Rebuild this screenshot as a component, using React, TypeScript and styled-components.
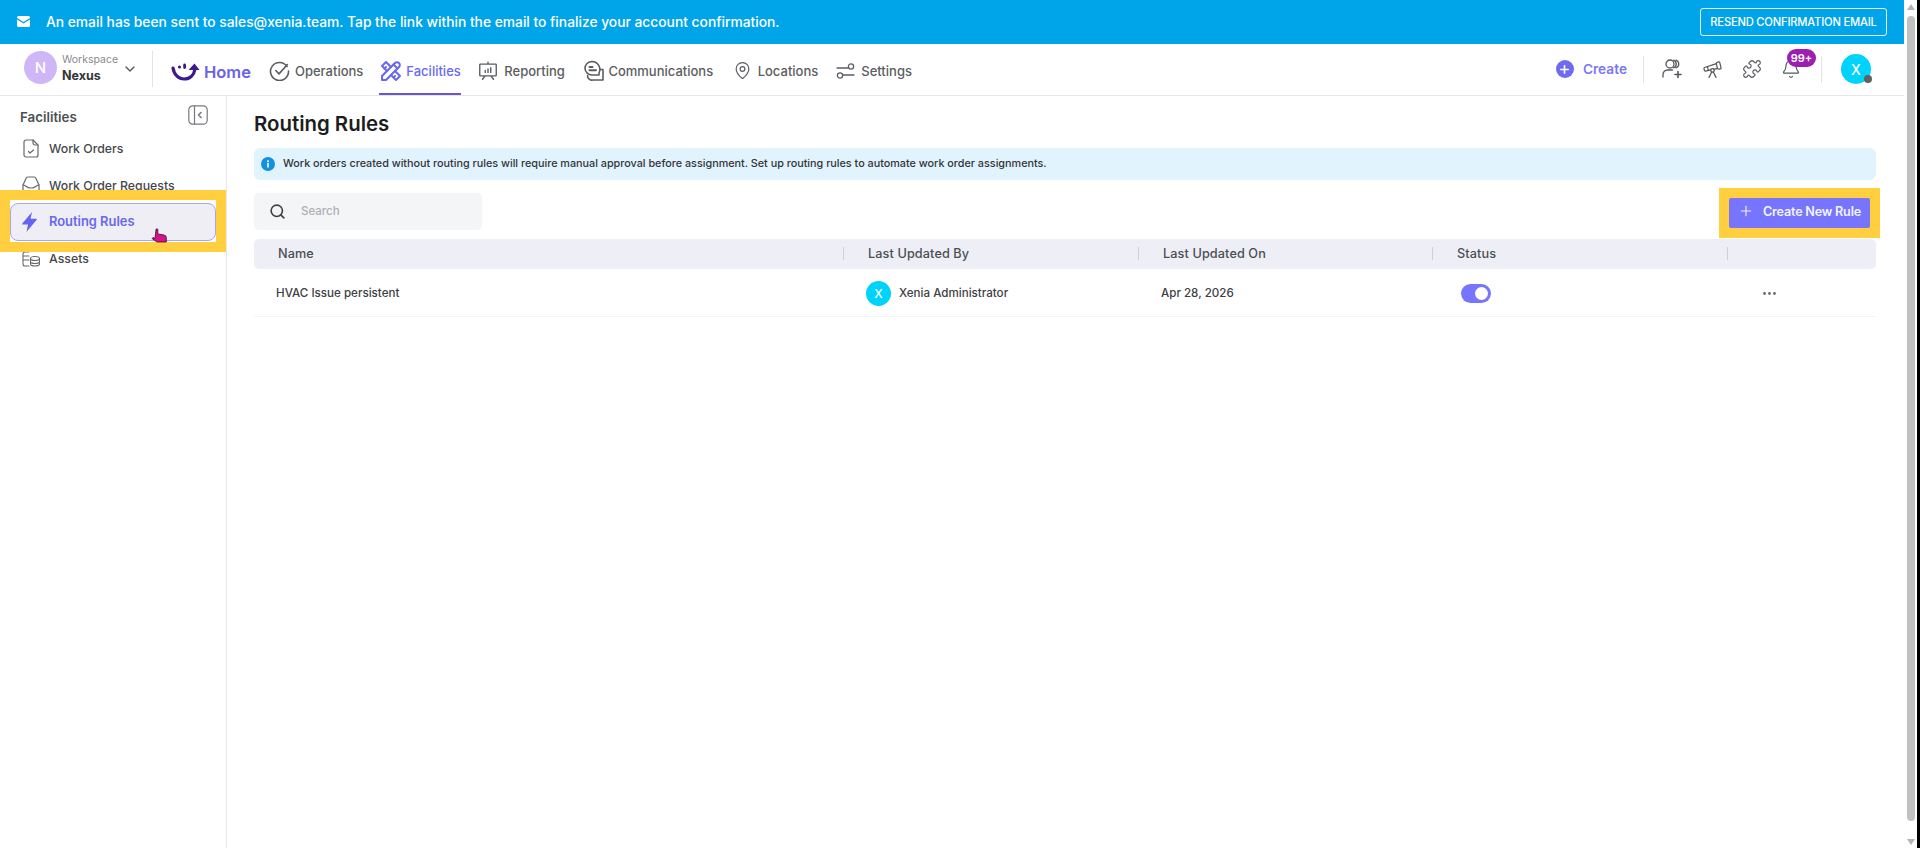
import React from "react";
import styled, { createGlobalStyle } from "styled-components";
import { Bell, MapPin, Puzzle, Search, Telescope, ChevronDown, Plus, MoreHorizontal } from "lucide-react";
import { TbTools } from "react-icons/tb";
import { PiPresentationChart } from "react-icons/pi";

const Global = createGlobalStyle`
  html, body { margin: 0; padding: 0; height: 848px; overflow: hidden; background: #000; }
  body { font-family: Inter, "Noto Sans", "Liberation Sans", sans-serif; color: #212327; }
  * { box-sizing: border-box; }
`;

const Page = styled.div`
  display: flex;
  width: 1920px;
  height: 848px;
  background: #000;
`;
const AppShell = styled.div`
  display: flex;
  flex-direction: column;
  width: 1904px;
  height: 100%;
  background: #fff;
`;
const ScrollTrack = styled.div`
  display: flex;
  flex-direction: column;
  align-items: center;
  width: 13px;
  height: 100%;
  padding: 4px 0 3px;
  background: #fff;
`;
const ScrollThumb = styled.div`
  flex: 1;
  width: 8px;
  margin: 6px 0 18px;
  border-radius: 4px;
  background: #c1c1c1;
`;
const Arrow = styled.div<{ $down?: boolean }>`
  width: 0;
  height: 0;
  border-left: 4px solid transparent;
  border-right: 4px solid transparent;
  ${(p) => (p.$down ? "border-top: 6px solid #b4b4b4;" : "border-bottom: 6px solid #b4b4b4;")}
`;
const Banner = styled.div`
  display: flex;
  align-items: center;
  height: 43.5px;
  padding: 0 17px 0 17px;
  background: #00a4e9;
  color: #fff;
`;
const BannerText = styled.span`
  margin-left: 16px;
  flex: 1;
  font-size: 13.8px;
  font-weight: 500;
  white-space: nowrap;
`;
const ResendButton = styled.button`
  width: 187px;
  height: 28px;
  padding: 0;
  border: 1px solid #e6f6fd;
  border-radius: 3px;
  background: transparent;
  color: #fff;
  font: 500 11.2px Inter, sans-serif;
  letter-spacing: -0.2px;
  white-space: nowrap;
`;
const Header = styled.header`
  display: flex;
  align-items: center;
  height: 52px;
  padding: 0 33px 0 24px;
  border-bottom: 1px solid #e6e6e8;
`;
const WorkspaceAvatar = styled.div`
  display: flex;
  align-items: center;
  justify-content: center;
  width: 33px;
  height: 33px;
  margin-bottom: 3px;
  border-radius: 50%;
  background: #cfb6f6;
  color: #fff;
  font-size: 15px;
  font-weight: 500;
`;
const WorkspaceInfo = styled.div`
  display: flex;
  flex-direction: column;
  gap: 2px;
  width: 60px;
  margin: 0 0 3px 5px;
`;
const WorkspaceLabel = styled.span`
  color: #8a8a8e;
  font-size: 10.5px;
  line-height: 13px;
`;
const WorkspaceName = styled.span`
  color: #34363a;
  font-size: 12.5px;
  font-weight: 700;
  line-height: 15px;
`;
const VDivider = styled.div<{ $h?: number; $ml?: number }>`
  width: 1px;
  height: ${(p) => p.$h ?? 36}px;
  margin-left: ${(p) => p.$ml ?? 0}px;
  background: #e4e4e6;
`;
const Nav = styled.nav`
  display: flex;
  align-items: stretch;
  align-self: stretch;
  margin-left: 18px;
  flex: 1;
`;
const HomeLink = styled.a`
  display: flex;
  align-items: center;
  gap: 4px;
  margin-right: 18px;
  padding-top: 5px;
  color: #6a62e6;
  font-size: 16.5px;
  font-weight: 600;
`;
const NavLink = styled.a<{ $active?: boolean; $gap: number; $mr: number }>`
  display: flex;
  align-items: center;
  gap: ${(p) => p.$gap}px;
  height: 100%;
  margin-right: ${(p) => p.$mr}px;
  padding-top: 5px;
  border-bottom: 2px solid ${(p) => (p.$active ? "#6457cf" : "transparent")};
  color: ${(p) => (p.$active ? "#6868f0" : "#5b5d61")};
  font-size: 13px;
  font-weight: 500;
  white-space: nowrap;
`;
const Actions = styled.div`
  display: flex;
  align-items: center;
  color: #55575b;
`;
const CreateLink = styled.a`
  display: flex;
  align-items: center;
  gap: 9px;
  margin-right: 16px;
  color: #7b78f5;
  font-size: 13.7px;
  font-weight: 600;
`;
const CreateIcon = styled.span`
  display: flex;
  align-items: center;
  justify-content: center;
  width: 18px;
  height: 18px;
  border-radius: 50%;
  background: #6d6bf0;
  color: #fff;
`;
const IconGroup = styled.div`
  display: flex;
  align-items: center;
  gap: 19px;
  margin: 0 0 0 18px;
`;
const BellWrap = styled.span`
  position: relative;
  display: flex;
  width: 20px;
`;
const Badge = styled.span`
  position: absolute;
  top: -10px;
  left: 6px;
  width: 29px;
  height: 18px;
  border-radius: 9px;
  background: #9c1fb0;
  color: #fff;
  font-size: 11px;
  font-weight: 600;
  line-height: 18px;
  text-align: center;
`;
const Avatar = styled.div<{ $size: number; $font: number; $ml?: number }>`
  position: relative;
  display: flex;
  flex: none;
  align-items: center;
  justify-content: center;
  width: ${(p) => p.$size}px;
  height: ${(p) => p.$size}px;
  margin-left: ${(p) => p.$ml ?? 0}px;
  border-radius: 50%;
  background: #00d3fb;
  color: #fff;
  font-size: ${(p) => p.$font}px;
  font-weight: 500;
`;
const StatusDot = styled.span`
  position: absolute;
  right: -1px;
  bottom: 1px;
  width: 8px;
  height: 8px;
  border-radius: 50%;
  background: #616161;
`;
const Body = styled.div`
  display: flex;
  flex: 1;
  min-height: 0;
`;
const Sidebar = styled.aside`
  display: flex;
  flex-direction: column;
  width: 227px;
  border-right: 1px solid #e8e8ea;
`;
const SidebarHead = styled.div`
  display: flex;
  align-items: flex-start;
  justify-content: space-between;
  height: 35px;
  padding: 9px 18px 0 20px;
`;
const SidebarTitle = styled.span`
  margin-top: 4px;
  color: #4d4f53;
  font-size: 13.3px;
  font-weight: 600;
  line-height: 16px;
`;
const SideItem = styled.a`
  display: flex;
  align-items: center;
  gap: 9px;
  height: 36.5px;
  padding-left: 22px;
  color: #45474b;
  font-size: 12.3px;
  font-weight: 500;
  white-space: nowrap;
`;
const SideIcon = styled.span`
  display: flex;
  justify-content: center;
  width: 18px;
`;
const Highlight = styled.div`
  position: relative;
  z-index: 1;
  height: 62px;
  margin: -14px 0 -11px;
  padding: 10px;
  background: #ffcf3f;
`;
const HighlightInner = styled.div`
  position: relative;
  height: 42px;
  padding-top: 3px;
  background: #fff;
`;
const ActiveSideItem = styled(SideItem)`
  height: 38px;
  padding-left: 9px;
  gap: 11px;
  border: 1px solid #a7a6f2;
  border-radius: 8px;
  background: #eeeef4;
  color: #6868f0;
  font-size: 12.9px;
  font-weight: 600;
`;
const HandCursor = styled.svg`
  position: absolute;
  left: 141px;
  top: 28px;
`;
const Main = styled.main`
  display: flex;
  flex: 1;
  flex-direction: column;
  padding: 14px 28px 0 27px;
  min-width: 0;
`;
const Title = styled.h1`
  margin: 0;
  height: 38px;
  color: #1c1d20;
  font-size: 20.4px;
  font-weight: 600;
  line-height: 28px;
`;
const InfoBar = styled.div`
  display: flex;
  align-items: center;
  gap: 8px;
  height: 32px;
  padding-left: 7px;
  border-radius: 6px;
  background: #e1f3fd;
  color: #33353a;
  font-size: 10.8px;
  font-weight: 500;
  white-space: nowrap;
`;
const Toolbar = styled.div`
  display: flex;
  align-items: center;
  justify-content: space-between;
  height: 37px;
  margin-top: 13px;
`;
const SearchBox = styled.div`
  display: flex;
  align-items: center;
  gap: 15px;
  width: 228px;
  height: 37px;
  padding-left: 15px;
  border-radius: 5px;
  background: #f4f5f7;
  color: #3f4145;
`;
const SearchHint = styled.span`
  color: #adafb4;
  font-size: 11.5px;
  font-weight: 500;
`;
const ButtonHighlight = styled.div`
  position: relative;
  top: 2px;
  width: 161px;
  height: 50px;
  margin: -7px -4px -7px 0;
  padding: 10px;
  background: #ffcf3f;
`;
const CreateRuleButton = styled.button`
  display: flex;
  align-items: center;
  gap: 9px;
  width: 141px;
  height: 30px;
  padding: 0 0 4px 9px;
  border: 0;
  border-radius: 2px;
  background: #7775fe;
  color: #f3f3ff;
  font: 600 12.6px Inter, sans-serif;
  letter-spacing: -0.2px;
  white-space: nowrap;
`;
const Grid = styled.div`
  display: grid;
  grid-template-columns: 589px 295px 294px 295px 149px;
  align-items: center;
`;
const TableHead = styled(Grid)`
  height: 30px;
  margin-top: 9px;
  border-radius: 5px;
  background: #eeeff6;
  color: #4c4e52;
  font-size: 12.7px;
  font-weight: 500;
  letter-spacing: 0.1px;
`;
const HeadCell = styled.div<{ $first?: boolean }>`
  display: flex;
  align-items: center;
  height: 13px;
  padding-left: 24px;
  border-left: ${(p) => (p.$first ? "0" : "1px solid #cfd0d6")};
`;
const TableRow = styled(Grid)`
  height: 48px;
  padding-top: 2px;
  border-bottom: 1px solid #f3f4f6;
  color: #3e4044;
  font-size: 11.6px;
  font-weight: 500;
`;
const Cell = styled.div<{ $pl: number }>`
  display: flex;
  align-items: center;
  gap: 8px;
  padding-left: ${(p) => p.$pl}px;
`;
const Toggle = styled.span`
  display: flex;
  align-items: center;
  justify-content: flex-end;
  width: 30px;
  height: 19px;
  padding: 0 3px;
  border-radius: 10px;
  background: #7775fe;
`;
const Knob = styled.span`
  width: 13px;
  height: 13px;
  border-radius: 50%;
  background: #fff;
`;

const stroke = { fill: "none", stroke: "currentColor", strokeWidth: 1.6, strokeLinecap: "round", strokeLinejoin: "round" } as const;

const MailIcon = () => (
  <svg width="13" height="11" viewBox="0 0 13 11"><path fill="#fff" d="M1.5 0h10A1.5 1.5 0 0 1 13 1.5V2L6.5 6 0 2v-.5A1.5 1.5 0 0 1 1.5 0ZM0 3.4l6.5 4 6.5-4v6.1A1.5 1.5 0 0 1 11.5 11h-10A1.5 1.5 0 0 1 0 9.5Z" /></svg>
);
const HomeLogo = () => (
  <svg width="29" height="20" viewBox="0 0 29 20">
    <path d="M2 6c1 7 6 11 11 11 6 0 10-4 11-10" fill="none" stroke="#3d1a8c" strokeWidth="3.2" strokeLinecap="round" />
    <path d="M17.5 8 23.5 1.5 28.5 8Z" fill="#3d1a8c" />
    <circle cx="8.5" cy="5" r="1.6" fill="#3d1a8c" />
    <rect x="12.2" y="1.5" width="2.8" height="5.5" rx="1.4" fill="#3d1a8c" />
  </svg>
);
const OperationsIcon = () => (
  <svg width="21" height="21" viewBox="0 0 21 21" {...stroke}>
    <path d="M18 6.5A9 9 0 1 0 19.5 11" />
    <path d="M6.8 10.5l3.2 3.4 8.4-9.4" />
  </svg>
);
const CommsIcon = () => (
  <svg width="22" height="22" viewBox="0 0 22 22" {...stroke}>
    <path d="M10 1.5a8 8 0 0 1 7 11.6V15h-7a7 7 0 0 1-7-6.5 7 7 0 0 1 7-7Z" />
    <path d="M7.5 7h3M7.5 10.3h6.5" strokeWidth="2" />
    <path d="M18 9.5h3V20h-10a4.5 4.5 0 0 1-5.5-4.5" />
  </svg>
);
const SettingsIcon = () => (
  <svg width="19" height="16" viewBox="0 0 19 16" {...stroke} strokeWidth={1.3}>
    <path d="M1 5h11" />
    <circle cx="15" cy="3.5" r="2.6" />
    <path d="M7 12h11" />
    <circle cx="4" cy="12.5" r="2.6" />
  </svg>
);
const AddUserIcon = () => (
  <svg width="21" height="20" viewBox="0 0 21 20" {...stroke} strokeWidth={1.3}>
    <circle cx="8" cy="5" r="4" />
    <path d="M11.5 1.2a4 4 0 0 1 0 7.6M14 1.2a4 4 0 0 1 0 7.6" />
    <path d="M1 18v-2.5A4.5 4.5 0 0 1 5.5 11h5" />
    <path d="M16 12.5v6M13 15.500h6" strokeWidth={1.6} />
  </svg>
);
const CollapseIcon = () => (
  <svg width="20" height="20" viewBox="0 0 20 20" {...stroke} strokeWidth={1.2} color="#77797d">
    <rect x="0.8" y="0.8" width="18.400" height="18.400" rx="4" />
    <path d="M6.500 1v18" />
    <path d="M13 7.500 10.500 10l2.500 2.500" strokeWidth={1.6} />
  </svg>
);
const DocCheckIcon = () => (
  <svg width="16" height="19" viewBox="0 0 16 19" {...stroke} strokeWidth={1.2} color="#66686c">
    <path d="M3 1h7l5 5v10a2 2 0 0 1-2 2H3a2 2 0 0 1-2-2V3a2 2 0 0 1 2-2Z" />
    <path d="M10 1v3a2 2 0 0 0 2 2h3" />
    <path d="M5.500 12.500 7 14l3.500-3" />
  </svg>
);
const InboxIcon = () => (
  <svg width="18" height="18" viewBox="0 0 18 18" {...stroke} strokeWidth={1.2} color="#66686c">
    <path d="M1 9 4 2.500A2 2 0 0 1 6 1h6a2 2 0 0 1 2 1.500L17 9v6a2 2 0 0 1-2 2H3a2 2 0 0 1-2-2Z" />
    <path d="M1 9c3 0 3 3 8 3s5-3 8-3" />
  </svg>
);
const AssetsIcon = () => (
  <svg width="18" height="16" viewBox="0 0 18 16" {...stroke} strokeWidth={1.1} color="#66686c">
    <path d="M7 15H3a2 2 0 0 1-2-2V3a2 2 0 0 1 2-2h4M1 5h6M1 9h6" />
    <ellipse cx="13" cy="7.500" rx="4.500" ry="2" />
    <path d="M8.500 7.500V13c0 1.100 2 2 4.500 2s4.500-.9 4.500-2V7.500M8.500 10.500c0 1.100 2 2 4.500 2s4.500-.9 4.500-2" />
  </svg>
);
const BoltIcon = () => (
  <svg width="15" height="20" viewBox="0 0 15 20"><path fill="#6464f2" d="M10 0 .3 11.500a.6.6 0 0 0 .5 1H6L4.500 20l10.200-12.300a.6.6 0 0 0-.5-1H8.500Z" /></svg>
);
const InfoIcon = () => (
  <svg width="14" height="14" viewBox="0 0 14 14">
    <circle cx="7" cy="7" r="7" fill="#1191e0" />
    <rect x="6.200" y="6" width="1.600" height="4.500" fill="#fff" />
    <circle cx="7" cy="4.200" r="1" fill="#fff" />
  </svg>
);
const Hand = () => (
  <HandCursor width="18" height="15" viewBox="0 0 18 15">
    <path fill="#d6128c" stroke="#3a0a2a" strokeWidth="0.8" d="M5 1.500c0-1 1.800-1 1.800 0V6l5 .8c2 .4 3.500 1 3.500 2.500V14H6L1 10.500l1-1 2 1Z" />
  </HandCursor>
);

const navItems = [
  { label: "Operations", icon: <OperationsIcon />, gap: 5, mr: 16 },
  { label: "Facilities", icon: <TbTools size={24} />, gap: 3, mr: 16.5 },
  { label: "Reporting", icon: <PiPresentationChart size={22} />, gap: 5, mr: 17.5 },
  { label: "Communications", icon: <CommsIcon />, gap: 4, mr: 19.5 },
  { label: "Locations", icon: <MapPin size={19} strokeWidth={1.5} />, gap: 6, mr: 18 },
  { label: "Settings", icon: <SettingsIcon />, gap: 6, mr: 0 },
];

export default function App() {
  return (
    <Page>
      <Global />
      <AppShell>
        <Banner>
          <MailIcon />
          <BannerText>An email has been sent to sales@xenia.team. Tap the link within the email to finalize your account confirmation.</BannerText>
          <ResendButton>RESEND CONFIRMATION EMAIL</ResendButton>
        </Banner>
        <Header>
          <WorkspaceAvatar>N</WorkspaceAvatar>
          <WorkspaceInfo>
            <WorkspaceLabel>Workspace</WorkspaceLabel>
            <WorkspaceName>Nexus</WorkspaceName>
          </WorkspaceInfo>
          <ChevronDown size={16} color="#55575b" />
          <VDivider $ml={14} />
          <Nav>
            <HomeLink>
              <HomeLogo />
              Home
            </HomeLink>
            {navItems.map((n) => (
              <NavLink key={n.label} $active={n.label === "Facilities"} $gap={n.gap} $mr={n.mr}>
                {n.icon}
                {n.label}
              </NavLink>
            ))}
          </Nav>
          <Actions>
            <CreateLink>
              <CreateIcon><Plus size={13} strokeWidth={3} /></CreateIcon>
              Create
            </CreateLink>
            <VDivider $h={27} />
            <IconGroup>
              <AddUserIcon />
              <Telescope size={21} strokeWidth={1.4} />
              <Puzzle size={20} strokeWidth={1.4} />
              <BellWrap>
                <Bell size={20} strokeWidth={1.4} />
                <Badge>99+</Badge>
              </BellWrap>
            </IconGroup>
            <VDivider $h={27} $ml={20} />
            <Avatar $size={30} $font={14} $ml={19}>
              X
              <StatusDot />
            </Avatar>
          </Actions>
        </Header>
        <Body>
          <Sidebar>
            <SidebarHead>
              <SidebarTitle>Facilities</SidebarTitle>
              <CollapseIcon />
            </SidebarHead>
            <SideItem><SideIcon><DocCheckIcon /></SideIcon>Work Orders</SideItem>
            <SideItem><SideIcon><InboxIcon /></SideIcon>Work Order Requests</SideItem>
            <Highlight>
              <HighlightInner>
                <ActiveSideItem>
                  <SideIcon><BoltIcon /></SideIcon>
                  Routing Rules
                </ActiveSideItem>
                <Hand />
              </HighlightInner>
            </Highlight>
            <SideItem><SideIcon><AssetsIcon /></SideIcon>Assets</SideItem>
          </Sidebar>
          <Main>
            <Title>Routing Rules</Title>
            <InfoBar>
              <InfoIcon />
              Work orders created without routing rules will require manual approval before assignment. Set up routing rules to automate work order assignments.
            </InfoBar>
            <Toolbar>
              <SearchBox>
                <Search size={17} strokeWidth={2.3} />
                <SearchHint>Search</SearchHint>
              </SearchBox>
              <ButtonHighlight>
                <CreateRuleButton>
                  <Plus size={16} strokeWidth={1.6} />
                  Create New Rule
                </CreateRuleButton>
              </ButtonHighlight>
            </Toolbar>
            <TableHead>
              <HeadCell $first>Name</HeadCell>
              <HeadCell>Last Updated By</HeadCell>
              <HeadCell>Last Updated On</HeadCell>
              <HeadCell>Status</HeadCell>
              <HeadCell />
            </TableHead>
            <TableRow>
              <Cell $pl={22}>HVAC Issue persistent</Cell>
              <Cell $pl={23}>
                <Avatar $size={25} $font={12}>X</Avatar>
                Xenia Administrator
              </Cell>
              <Cell $pl={23}>Apr 28, 2026</Cell>
              <Cell $pl={29}><Toggle><Knob /></Toggle></Cell>
              <Cell $pl={34}><MoreHorizontal size={17} color="#66686c" /></Cell>
            </TableRow>
          </Main>
        </Body>
      </AppShell>
      <ScrollTrack>
        <Arrow />
        <ScrollThumb />
        <Arrow $down />
      </ScrollTrack>
    </Page>
  );
}
